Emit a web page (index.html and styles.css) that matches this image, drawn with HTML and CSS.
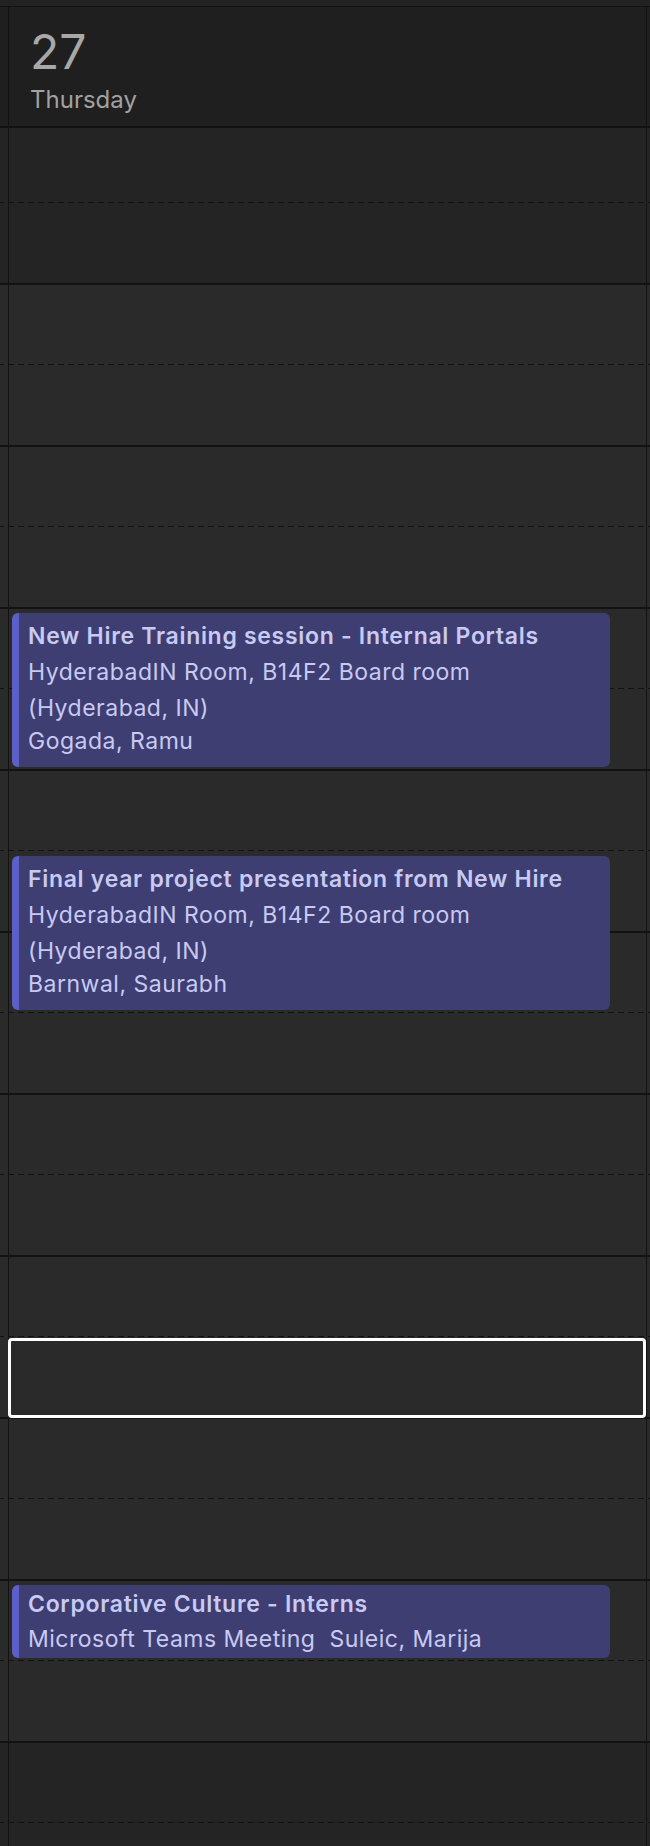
FILE: index.html
```html
<!DOCTYPE html>
<html lang="en">
<head>
<meta charset="utf-8">
<title>Thursday 27</title>
<link rel="stylesheet" href="styles.css">
</head>
<body>
<div class="day">
  <header class="day-header">
    <div class="day-header-cell">
      <div class="day-number">27</div>
      <div class="day-name">Thursday</div>
    </div>
  </header>
  <div class="grid">
    <div class="hour off">
      <div class="slot half first"><div class="cell"></div></div>
      <div class="slot full"><div class="cell"></div></div>
    </div>
    <div class="hour">
      <div class="slot half"><div class="cell"></div></div>
      <div class="slot full"><div class="cell"></div></div>
    </div>
    <div class="hour">
      <div class="slot half"><div class="cell"></div></div>
      <div class="slot full"><div class="cell"></div></div>
    </div>
    <div class="hour">
      <div class="slot half"><div class="cell"></div></div>
      <div class="slot full"><div class="cell"></div></div>
    </div>
    <div class="hour">
      <div class="slot half"><div class="cell"></div></div>
      <div class="slot full"><div class="cell"></div></div>
    </div>
    <div class="hour">
      <div class="slot half"><div class="cell"></div></div>
      <div class="slot full"><div class="cell"></div></div>
    </div>
    <div class="hour">
      <div class="slot half"><div class="cell"></div></div>
      <div class="slot full"><div class="cell"></div></div>
    </div>
    <div class="hour">
      <div class="slot half"><div class="cell"></div></div>
      <div class="slot full"><div class="cell"></div></div>
    </div>
    <div class="hour">
      <div class="slot half"><div class="cell"></div></div>
      <div class="slot full"><div class="cell"></div></div>
    </div>
    <div class="hour">
      <div class="slot half"><div class="cell"></div></div>
      <div class="slot full"><div class="cell"></div></div>
    </div>
    <div class="hour off">
      <div class="slot half"><div class="cell"></div></div>
      <div class="slot full"><div class="cell"></div></div>
    </div>

    <div class="event" style="top:485px;height:154px">
      <div class="event-title">New Hire Training session - Internal Portals</div>
      <div class="event-location">HyderabadIN Room, B14F2 Board room (Hyderabad, IN)</div>
      <div class="event-organizer">Gogada, Ramu</div>
    </div>

    <div class="event" style="top:728px;height:154px">
      <div class="event-title">Final year project presentation from New Hire</div>
      <div class="event-location">HyderabadIN Room, B14F2 Board room (Hyderabad, IN)</div>
      <div class="event-organizer">Barnwal, Saurabh</div>
    </div>

    <div class="selection"></div>

    <div class="event short" style="top:1457px;height:73px">
      <div class="event-title">Corporative Culture - Interns</div>
      <div class="event-meta">Microsoft Teams Meeting&nbsp; Suleic, Marija</div>
    </div>
  </div>
</div>
</body>
</html>
```
FILE: styles.css
```css
* {
  box-sizing: border-box;
}

html,
body {
  margin: 0;
  padding: 0;
  overflow: hidden;
}

body {
  width: 650px;
  height: 1846px;
  background: #222222;
  font-family: Inter, "Noto Sans", sans-serif;
}

.day {
  padding-top: 6px;
}

.day-header {
  background: #1f1f1f;
  border-top: 1px solid #121212;
  border-bottom: 2px solid #121212;
}

.day-header-cell {
  height: 119px;
  margin: 0 3px 0 8px;
  border-left: 1px solid #121212;
  border-right: 1px solid #121212;
  padding: 21px 0 0 21px;
}

.day-number {
  font-size: 48px;
  line-height: 48px;
  font-weight: 400;
  color: #a8a8a8;
}

.day-name {
  margin-top: 12px;
  font-size: 24px;
  line-height: 24px;
  color: #a2a2a2;
}

.grid {
  position: relative;
}

.hour {
  background: #2a2a2a;
}

.hour.off {
  background: #242424;
}

.slot.half {
  height: 80px;
  padding-bottom: 1px;
  background-image: repeating-linear-gradient(to right, #121212 0 6px, transparent 6px 10px);
  background-size: calc(100% + 4px) 1px;
  background-position: -2px 100%;
  background-repeat: no-repeat;
}

.slot.first {
  height: 75px;
}

.slot.full {
  height: 82px;
  border-bottom: 2px solid #121212;
}

.cell {
  height: 100%;
  margin: 0 3px 0 8px;
  border-left: 1px solid #121212;
  border-right: 1px solid #121212;
}

.event {
  position: absolute;
  left: 12px;
  width: 598px;
  background: #3e3e72;
  border-left: 7px solid #5b5fc7;
  border-radius: 6px;
  padding: 7px 20px 0 9px;
  color: #c8caf3;
  font-size: 23px;
  letter-spacing: 0.5px;
  overflow: hidden;
}

.event-title {
  font-weight: 600;
  letter-spacing: 0.7px;
  line-height: 32px;
  margin-bottom: 2px;
  white-space: nowrap;
}

.event-location {
  line-height: 36px;
}

.event-organizer {
  line-height: 30px;
}

.event.short {
  padding-top: 3px;
}

.event-meta {
  line-height: 35px;
  white-space: nowrap;
}

.selection {
  position: absolute;
  top: 1210px;
  left: 8px;
  width: 638px;
  height: 80px;
  border: 3px solid #ffffff;
  border-radius: 4px;
}
```
